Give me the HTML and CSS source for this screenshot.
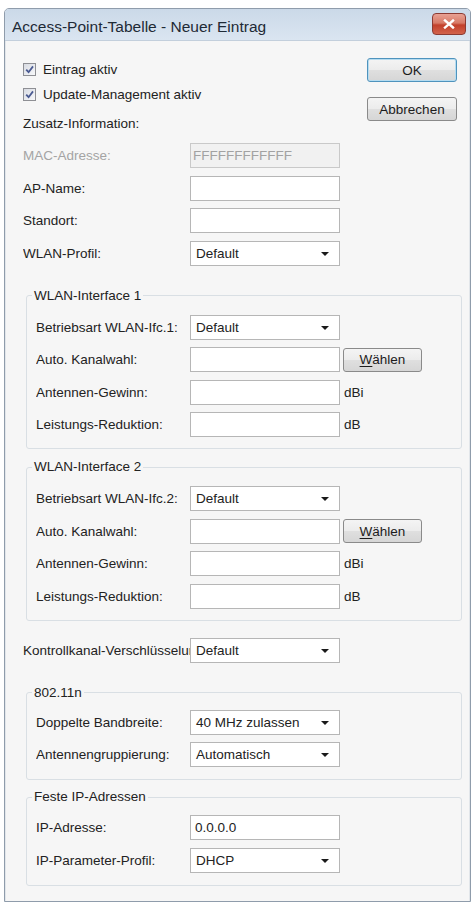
FILE: index.html
```html
<!DOCTYPE html>
<html lang="de">
<head>
<meta charset="utf-8">
<title>Access-Point-Tabelle - Neuer Eintrag</title>
<link rel="stylesheet" href="styles.css">
</head>
<body>
<div class="window">
  <div class="titlebar">
    <span class="title">Access-Point-Tabelle - Neuer Eintrag</span>
    <span class="close"><svg width="12" height="10" viewBox="0 0 12 10"><path d="M2 1.5 L10 8.5 M10 1.5 L2 8.5" stroke="#ffffff" stroke-width="2.4" stroke-linecap="square"/></svg></span>
  </div>
  <div class="client">
    <div class="top">
      <div class="top-left">
        <div class="check"><span class="box"><svg width="9" height="9" viewBox="0 0 9 9"><path d="M1.2 4.6 L3.6 7.2 L8 1.4" fill="none" stroke="#4b5b92" stroke-width="1.8"/></svg></span>Eintrag aktiv</div>
        <div class="check"><span class="box"><svg width="9" height="9" viewBox="0 0 9 9"><path d="M1.2 4.6 L3.6 7.2 L8 1.4" fill="none" stroke="#4b5b92" stroke-width="1.8"/></svg></span>Update-Management aktiv</div>
        <div class="section-label">Zusatz-Information:</div>
      </div>
      <div class="top-right">
        <div class="btn btn-default">OK</div>
        <div class="btn btn-cancel">Abbrechen</div>
      </div>
    </div>

    <div class="rows main-rows">
      <div class="row"><span class="lbl lbl-disabled">MAC-Adresse:</span><span class="field field-disabled">FFFFFFFFFFFF</span></div>
      <div class="row"><span class="lbl">AP-Name:</span><span class="field"></span></div>
      <div class="row"><span class="lbl">Standort:</span><span class="field"></span></div>
      <div class="row"><span class="lbl">WLAN-Profil:</span><span class="field combo">Default<i class="arrow"></i></span></div>
    </div>

    <fieldset class="group g1">
      <legend>WLAN-Interface 1</legend>
      <div class="rows">
        <div class="row"><span class="lbl">Betriebsart WLAN-Ifc.1:</span><span class="field combo">Default<i class="arrow"></i></span></div>
        <div class="row"><span class="lbl">Auto. Kanalwahl:</span><span class="field"></span><span class="btn btn-small"><u>W</u>ählen</span></div>
        <div class="row"><span class="lbl">Antennen-Gewinn:</span><span class="field"></span><span class="unit">dBi</span></div>
        <div class="row"><span class="lbl">Leistungs-Reduktion:</span><span class="field"></span><span class="unit">dB</span></div>
      </div>
    </fieldset>

    <fieldset class="group g2">
      <legend>WLAN-Interface 2</legend>
      <div class="rows">
        <div class="row"><span class="lbl">Betriebsart WLAN-Ifc.2:</span><span class="field combo">Default<i class="arrow"></i></span></div>
        <div class="row"><span class="lbl">Auto. Kanalwahl:</span><span class="field"></span><span class="btn btn-small"><u>W</u>ählen</span></div>
        <div class="row"><span class="lbl">Antennen-Gewinn:</span><span class="field"></span><span class="unit">dBi</span></div>
        <div class="row"><span class="lbl">Leistungs-Reduktion:</span><span class="field"></span><span class="unit">dB</span></div>
      </div>
    </fieldset>

    <div class="rows single-row">
      <div class="row"><span class="lbl lbl-clip"><span class="clip-text">Kontrollkanal-Verschlüsselung:</span></span><span class="field combo">Default<i class="arrow"></i></span></div>
    </div>

    <fieldset class="group g3">
      <legend>802.11n</legend>
      <div class="rows">
        <div class="row"><span class="lbl">Doppelte Bandbreite:</span><span class="field combo">40 MHz zulassen<i class="arrow"></i></span></div>
        <div class="row"><span class="lbl">Antennengruppierung:</span><span class="field combo">Automatisch<i class="arrow"></i></span></div>
      </div>
    </fieldset>

    <fieldset class="group g4">
      <legend>Feste IP-Adressen</legend>
      <div class="rows">
        <div class="row"><span class="lbl">IP-Adresse:</span><span class="field">0.0.0.0</span></div>
        <div class="row"><span class="lbl">IP-Parameter-Profil:</span><span class="field combo">DHCP<i class="arrow"></i></span></div>
      </div>
    </fieldset>
  </div>
</div>
</body>
</html>
```

FILE: styles.css
```css
* { box-sizing: border-box; }

html, body {
  margin: 0;
  padding: 0;
  background: #ffffff;
}

body {
  font-family: "Liberation Sans", Arial, sans-serif;
  font-size: 13.5px;
  color: #222222;
}

.window {
  margin: 8px 0 0 4px;
  width: 467px;
  height: 894px;
  border: 1px solid #8f9cab;
  border-radius: 5px 5px 0 0;
  background: #f6f6f6;
  display: flex;
  flex-direction: column;
  overflow: hidden;
}

.titlebar {
  height: 32px;
  flex: none;
  display: flex;
  align-items: center;
  justify-content: space-between;
  padding: 0 4px 0 7px;
  background: linear-gradient(#cbd9e8, #dae5f1);
  border-bottom: 1px solid #c3cfdc;
}

.title {
  font-size: 15.5px;
  color: #1e2a36;
  padding-top: 4px;
}

.close {
  width: 34px;
  height: 22px;
  margin-top: -2px;
  border: 1px solid #8b3b33;
  border-radius: 4px;
  background: linear-gradient(#e8a193 0%, #d77a67 45%, #c2402b 55%, #d2634c 100%);
  display: flex;
  align-items: center;
  justify-content: center;
}

.client {
  flex: 1;
  padding: 16px 12px 0 17px;
  border-left: 1px solid #e2e6ea;
  border-right: 1px solid #e2e6ea;
}

.top {
  display: flex;
  justify-content: space-between;
}

.top-left {
  display: flex;
  flex-direction: column;
}

.check {
  height: 25px;
  display: flex;
  align-items: center;
  gap: 7px;
}

.box {
  width: 13px;
  height: 13px;
  border: 1px solid #8e8f94;
  background: linear-gradient(135deg, #d8dbe2, #f7f8fa);
  display: flex;
  align-items: center;
  justify-content: center;
}

.section-label {
  margin-top: 8px;
  height: 18px;
  line-height: 18px;
}

.top-right {
  width: 90px;
  display: flex;
  flex-direction: column;
  gap: 15px;
  padding-top: 1px;
}

.btn {
  height: 24px;
  border: 1px solid #8a8a8a;
  border-radius: 3px;
  background: linear-gradient(#f4f4f4 0%, #ececec 48%, #dfdfdf 52%, #d6d6d6 100%);
  display: flex;
  align-items: center;
  justify-content: center;
  color: #1c1c1c;
}

.btn-default {
  border-color: #4f93bd;
  box-shadow: inset 0 0 0 1px #b6dcf0;
}

.rows {
  display: flex;
  flex-direction: column;
  gap: 7.5px;
}

.main-rows {
  margin-top: 10px;
}

.row {
  height: 25px;
  display: flex;
  align-items: center;
}

.lbl {
  width: 167px;
  flex: none;
  white-space: nowrap;
  overflow: hidden;
}

.lbl-clip {
  display: block;
  line-height: 25px;
  height: 25px;
}

.lbl-disabled {
  color: #a4a4a4;
}

.field {
  width: 150px;
  height: 25px;
  flex: none;
  border: 1px solid #b6b6b6;
  background: #ffffff;
  display: flex;
  align-items: center;
  padding-left: 4px;
  white-space: nowrap;
  position: relative;
}

.field-disabled {
  background: #f1f1f1;
  border-color: #c9c9c9;
  color: #a2a2a2;
  padding-left: 2px;
}

.combo {
  padding-left: 5px;
}

.arrow {
  position: absolute;
  right: 10px;
  top: 10px;
  width: 0;
  height: 0;
  border-left: 4px solid transparent;
  border-right: 4px solid transparent;
  border-top: 4px solid #1a1a1a;
}

.btn-small {
  width: 79px;
  margin-left: 3px;
}

.btn-small u {
  text-decoration: underline;
  text-underline-offset: 2px;
}

.unit {
  margin-left: 4px;
}

.group {
  margin: 0 0 0 3px;
  width: 436px;
  min-width: 0;
  padding: 11px 0 11px 9px;
  border: 1px solid #d9dfe4;
  border-radius: 3px;
}

.group legend {
  padding: 0 2px;
  margin-left: -4px;
  line-height: 16px;
}

.group .lbl {
  width: 154px;
}

.g1 { margin-top: 22px; }
.g2 { margin-top: 10px; }
.single-row { margin-top: 17px; }
.g3 { margin-top: 22px; padding-top: 9px; padding-bottom: 12px; }
.g4 { margin-top: 9px; padding-top: 10px; padding-bottom: 12px; }
```
